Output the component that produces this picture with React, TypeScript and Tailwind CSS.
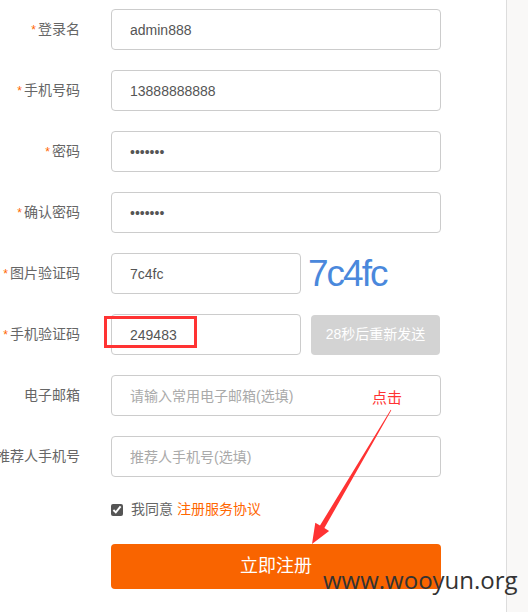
const cjk = { fontFamily: '"Liberation Sans", "Noto Sans CJK SC", sans-serif' };

const fields = [
  { label: "登录名", req: true, value: "admin888" },
  { label: "手机号码", req: true, value: "13888888888" },
  { label: "密码", req: true, value: "1234567", password: true },
  { label: "确认密码", req: true, value: "1234567", password: true },
];

function Label({ text, req }: { text: string; req?: boolean }) {
  return (
    <div className="flex w-[80px] shrink-0 justify-end">
      <span className="shrink-0 whitespace-nowrap text-[14px] text-[#666]">
        {req && <span className="mr-[2px] text-[12px] text-[#f60]">*</span>}
        {text}
      </span>
    </div>
  );
}

function Field({ value, placeholder, password, className = "w-[330px]" }: { value?: string; placeholder?: string; password?: boolean; className?: string }) {
  return (
    <input
      readOnly
      type={password ? "password" : "text"}
      value={value ?? ""}
      placeholder={placeholder}
      style={cjk}
      className={`${className} h-[41px] rounded-[4px] border border-[#ccc] bg-white pl-[18px] text-[14px] text-[#555] outline-none placeholder:text-[#aaa]`}
    />
  );
}

export default function App() {
  return (
    <div className="relative flex h-[612px] w-[528px] overflow-hidden bg-white" style={cjk}>
      <div className="flex w-[506px] shrink-0 flex-col pt-[9px]">
        <div className="flex flex-col gap-[20px]">
          {fields.map((f) => (
            <div key={f.label} className="flex items-center gap-[31px]">
              <Label text={f.label} req={f.req} />
              <Field value={f.value} password={f.password} />
            </div>
          ))}

          <div className="flex items-center gap-[31px]">
            <Label text="图片验证码" req />
            <div className="flex items-center gap-[7px]">
              <Field value="7c4fc" className="w-[190px]" />
              <span className="text-[37px] leading-none tracking-[-2px] text-[#4a88dc]" style={{ fontFamily: '"Liberation Sans", sans-serif' }}>
                7c4fc
              </span>
            </div>
          </div>

          <div className="flex items-center gap-[31px]">
            <Label text="手机验证码" req />
            <div className="flex items-center gap-[10px]">
              <div className="relative">
                <Field value="249483" className="w-[190px]" />
                <div className="absolute left-[-7px] top-[2px] h-[32px] w-[93px] border-[3px] border-[#f33]" />
              </div>
              <button className="h-[40px] w-[129px] rounded-[4px] bg-[#d3d3d3] text-[14px] text-white">
                28秒后重新发送
              </button>
            </div>
          </div>

          <div className="flex items-center gap-[31px]">
            <Label text="电子邮箱" />
            <Field placeholder="请输入常用电子邮箱(选填)" />
          </div>

          <div className="flex items-center gap-[31px]">
            <Label text="推荐人手机号" />
            <Field placeholder="推荐人手机号(选填)" />
          </div>
        </div>

        <div className="ml-[111px] mt-[22px] flex items-center gap-[8px] text-[14px]">
          <input type="checkbox" readOnly checked className="h-[12px] w-[12px] accent-[#555]" />
          <span className="text-[#666]">
            我同意 <span className="text-[#f60]">注册服务协议</span>
          </span>
        </div>

        <button className="ml-[111px] mt-[24px] h-[45px] w-[330px] rounded-[4px] bg-[#f96400] text-[18px] text-white">
          立即注册
        </button>
      </div>

      <div className="flex-1 border-l border-[#ddd] bg-[#f9f8f7]" />

      <span className="absolute left-[372px] top-[387px] text-[15px] text-[#f33]">点击</span>
      <svg className="absolute left-0 top-0" width="528" height="612" viewBox="0 0 528 612">
        <polygon
          points="391.3,410.2 390.7,409.8 320,525.5 315.3,522.7 312,544 329.1,530.9 324.4,528.1"
          fill="#f33"
        />
      </svg>

      <span
        className="absolute left-[323px] top-[568px] text-[24px] leading-none text-[#333]"
        style={{ fontFamily: '"Open Sans", sans-serif' }}
      >
        www.wooyun.org
      </span>
    </div>
  );
}
